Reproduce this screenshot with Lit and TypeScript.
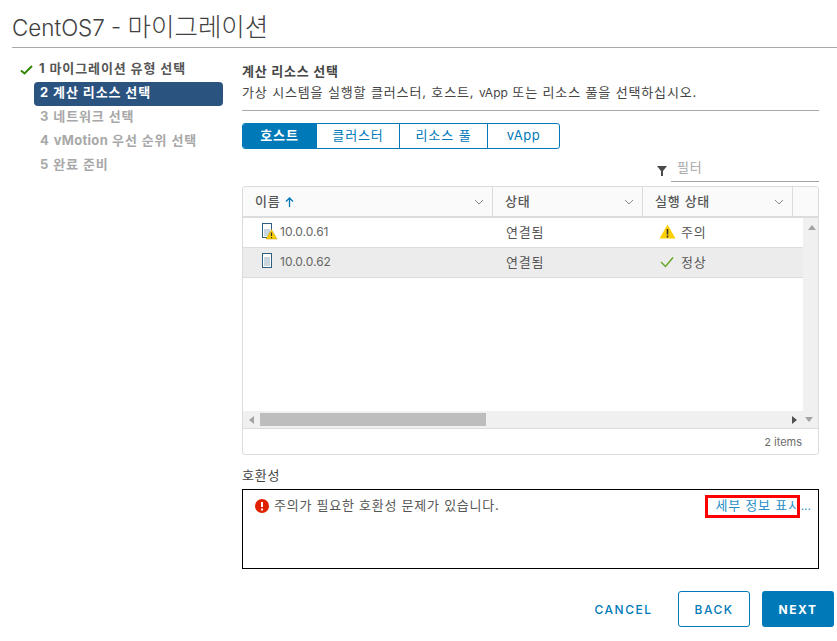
import { LitElement, html, css } from "lit";
import { customElement } from "lit/decorators.js";

const chev = html`<svg class="chev" width="10" height="6" viewBox="0 0 10 6"><path d="M1 1l4 4 4-4" fill="none" stroke="#8a8a8a" stroke-width="1"/></svg>`;

@customElement("app-root")
export class AppRoot extends LitElement {
  static styles = css`
    :host { display: block; width: 837px; height: 641px; overflow: hidden; background: #fff; color: #565656;
      font-family: "Inter", "Noto Sans CJK KR", sans-serif; font-size: 12px; }
    * { box-sizing: border-box; }
    .la { font-size: 12px; letter-spacing: 0; }
    .title { margin: 0 0 0 12px; height: 48px; padding-top: 12px; border-bottom: 1px solid #a9a9a9; font-size: 22.4px; font-weight: 300; line-height: 30px; color: #404040; white-space: nowrap; }
    .title b { font-weight: 300; font-size: 25.5px; line-height: 30px; }
    .body { display: flex; padding-left: 12px; }
    .side { width: 230px; flex: none; padding-top: 10px; font-weight: 700; font-size: 13px; letter-spacing: .9px; }
    .step { height: 24px; line-height: 21px; color: #565656; position: relative; white-space: nowrap; }
    .step .la { font-size: 13px; letter-spacing: .3px; }
    .step.plain { padding-left: 28px; color: #a8a8a8; }
    .step.done { padding-left: 27px; }
    .step.done svg { position: absolute; left: 8px; top: 7px; }
    .step.cur { margin: 0 19px 0 22px; padding-left: 6px; background: #2b5380; border-radius: 4px; color: #fff; }
    .main { width: 577px; flex: none; padding-top: 15px; }
    .ko { font-size: 13px; letter-spacing: .75px; }
    .h { font-weight: 700; line-height: 16px; height: 18px; color: #454545; }
    .sub { line-height: 17px; height: 27px; color: #454545; border-bottom: 1px solid #a9a9a9; margin-top: 3px; white-space: nowrap; letter-spacing: .86px; }
    .tabs { display: inline-flex; margin-top: 12px; height: 26px; border: 1px solid #0079b8; border-radius: 3px; overflow: hidden; vertical-align: top; }
    .tab { display: flex; align-items: center; justify-content: center; color: #0079b8; border-left: 1px solid #0079b8; font-size: 13px; letter-spacing: .9px; padding-bottom: 3px; }
    .tab .la { font-size: 13px; letter-spacing: .6px; }
    .tab:first-child { border-left: 0; background: #0079b8; color: #fff; font-weight: 600; }
    .filterrow { display: flex; justify-content: flex-end; align-items: flex-end; height: 33px; }
    .ficon { margin: 0 4px 6px 0; }
    .fin { width: 148px; height: 24px; border-bottom: 1px solid #a3a3a3; color: #a8a8a8; padding: 0 0 0 6px; line-height: 18px; }
    .grid { width: 577px; height: 269px; margin-top: 4px; border: 1px solid #dcdcdc; border-radius: 3px; display: flex; flex-direction: column; overflow: hidden; }
    .head { display: flex; height: 31px; flex: none; background: #fafafa; border-bottom: 2px solid #dcdcdc; color: #565656; font-weight: 500; }
    .hc { display: flex; align-items: center; justify-content: space-between; padding: 0 8px 3px 12px; border-right: 1px solid #dcdcdc; }
    .hc .chev { margin-top: 3px; }
    .hc.last { border: 0; padding: 0; }
    .rows { flex: 1; display: flex; min-height: 0; }
    .rowswrap { flex: 1; display: flex; flex-direction: column; }
    .row { display: flex; height: 30px; border-bottom: 1px solid #dcdcdc; align-items: center; color: #565656; padding-bottom: 2px; }
    .row.sel { background: #ececec; border-top: 1px solid #dcdcdc; margin-top: -1px; height: 31px; }
    .c1 { width: 250px; padding-left: 19px; display: flex; align-items: center; gap: 2px; }
    .c1 span { color: #666; }
    .c2 { width: 150px; padding-left: 13px; }
    .c3 { width: 160px; padding-left: 16px; display: flex; align-items: center; gap: 5px; }
    .vs { width: 17px; flex: none; background: #f0f0f0; position: relative; }
    .vs svg { position: absolute; left: 5px; top: 7px; }
    .hs { height: 18px; flex: none; background: #f0f0f0; border-bottom: 1px solid #dcdcdc; position: relative; }
    .thumb { position: absolute; left: 17px; top: 2px; width: 226px; height: 13px; background: #bdbdbd; }
    .hs svg { position: absolute; top: 5px; }
    .foot { height: 25px; flex: none; display: flex; align-items: center; justify-content: flex-end; padding-right: 16px; font-size: 11px; color: #6c6c6c; }
    .clabel { margin-top: 12px; line-height: 16px; height: 18px; color: #454545; }
    .box { margin-top: 4px; width: 577px; height: 80px; border: 1px solid #000; display: flex; justify-content: space-between; padding: 6px 7px 0 12px; line-height: 18px; color: #565656; position: relative; }
    .msg { display: flex; gap: 5px; align-items: flex-start; }
    .msg svg { margin-top: 3px; }
    .link { color: #2a8fc4; white-space: nowrap; padding-left: 1px; }
    .red { border: 3px solid #f00; height: 23px; width: 95px; position: absolute; left: 462px; top: 5px; }
    .actions { display: flex; justify-content: flex-end; align-items: center; margin-top: 22px; margin-right: -15px; }
    .btn { height: 36px; display: flex; align-items: center; justify-content: center; font-size: 12px; font-weight: 500; letter-spacing: 1.5px; border-radius: 3px; }
    .cancel { width: 85px; color: #0079b8; margin-right: 12px; }
    .back { width: 72px; color: #0079b8; border: 1px solid #0079b8; margin-right: 12px; }
    .next { width: 72px; color: #fff; background: #0079b8; font-weight: 700; }
  `;

  render() {
    return html`
      <div class="title">CentOS7 - <b>마이그레이션</b></div>
      <div class="body">
        <div class="side">
          <div class="step done"><svg width="13" height="10" viewBox="0 0 13 10"><path d="M1 5.5l3.5 3L12 1" fill="none" stroke="#318700" stroke-width="2"/></svg>1 마이그레이션 유형 선택</div>
          <div class="step cur">2 계산 리소스 선택</div>
          <div class="step plain">3 네트워크 선택</div>
          <div class="step plain">4 <span class="la">vMotion</span> 우선 순위 선택</div>
          <div class="step plain">5 완료 준비</div>
        </div>
        <div class="main">
          <div class="h ko">계산 리소스 선택</div>
          <div class="sub ko">가상 시스템을 실행할 클러스터, 호스트, <span class="la">vApp</span> 또는 리소스 풀을 선택하십시오.</div>
          <div class="tabs">
            <div class="tab" style="width:73px">호스트</div>
            <div class="tab" style="width:83px">클러스터</div>
            <div class="tab" style="width:88px">리소스 풀</div>
            <div class="tab" style="width:72px"><span class="la">vApp</span></div>
          </div>
          <div class="filterrow">
            <svg class="ficon" width="10" height="10" viewBox="0 0 10 10"><path d="M0 0h10L6 5v5H4V5z" fill="#4a4a4a"/></svg>
            <div class="fin ko">필터</div>
          </div>
          <div class="grid">
            <div class="head">
              <div class="hc ko" style="width:250px"><span>이름 <svg width="9" height="10" viewBox="0 0 9 10" style="vertical-align:-1px"><path d="M4.5 10V1M1 4.5l3.5-3.5 3.5 3.5" fill="none" stroke="#0079b8" stroke-width="1.3"/></svg></span>${chev}</div>
              <div class="hc ko" style="width:150px"><span>상태</span>${chev}</div>
              <div class="hc ko" style="width:150px"><span>실행 상태</span>${chev}</div>
              <div class="hc last" style="flex:1"></div>
            </div>
            <div class="rows">
              <div class="rowswrap">
                <div class="row">
                  <div class="c1"><svg width="16" height="17" viewBox="0 0 16 17"><rect x=".5" y=".5" width="9" height="14" fill="#fff" stroke="#2f5f80"/><rect x="2" y="6" width="6" height="7" fill="#c9d6df"/><path d="M9.5 6.5l5.5 9.5H4z" fill="#fdd006" stroke="#b89400" stroke-width=".5"/><path d="M9.5 9.5v3.5M9.5 14v1.3" stroke="#333" stroke-width="1.2"/></svg><span>10.0.0.61</span></div>
                  <div class="c2 ko">연결됨</div>
                  <div class="c3"><svg width="17" height="15" viewBox="0 0 17 15"><path d="M8.5 .5L16.5 14.5H.5z" fill="#fdd006"/><path d="M8.5 5v5.5M8.5 11.5v2" stroke="#333" stroke-width="1.6"/></svg><span class="ko">주의</span></div>
                </div>
                <div class="row sel">
                  <div class="c1"><svg width="16" height="17" viewBox="0 0 16 17"><rect x=".5" y=".5" width="9" height="14" fill="#fff" stroke="#2f5f80"/><rect x="2" y="4" width="6" height="9" fill="#c9d6df"/></svg><span>10.0.0.62</span></div>
                  <div class="c2 ko">연결됨</div>
                  <div class="c3"><svg width="17" height="12" viewBox="0 0 17 12"><path d="M2 6l4.5 4.5L14 1.5" fill="none" stroke="#62a420" stroke-width="1.4"/></svg><span class="ko">정상</span></div>
                </div>
              </div>
              <div class="vs"><svg width="8" height="5" viewBox="0 0 8 5"><path d="M4 0l4 5H0z" fill="#a3a3a3"/></svg></div>
            </div>
            <div class="hs">
              <svg style="left:6px" width="5" height="8" viewBox="0 0 5 8"><path d="M5 0v8L0 4z" fill="#a3a3a3"/></svg>
              <div class="thumb"></div>
              <svg style="left:549px" width="5" height="8" viewBox="0 0 5 8"><path d="M0 0v8l5-4z" fill="#505050"/></svg>
              <svg style="left:562px;top:6px" width="8" height="5" viewBox="0 0 8 5"><path d="M0 0h8L4 5z" fill="#a3a3a3"/></svg>
            </div>
            <div class="foot">2 items</div>
          </div>
          <div class="clabel ko">호환성</div>
          <div class="box">
            <div class="msg"><svg width="14" height="14" viewBox="0 0 14 14"><circle cx="7" cy="7" r="7" fill="#e12200"/><path d="M7 3v5M7 9.5v2" stroke="#fff" stroke-width="2"/></svg><span class="ko">주의가 필요한 호환성 문제가 있습니다.</span></div>
            <div class="link ko">세부 정보 표시<span class="la">...</span></div>
            <div class="red"></div>
          </div>
          <div class="actions">
            <div class="btn cancel">CANCEL</div>
            <div class="btn back">BACK</div>
            <div class="btn next">NEXT</div>
          </div>
        </div>
      </div>
    `;
  }
}
